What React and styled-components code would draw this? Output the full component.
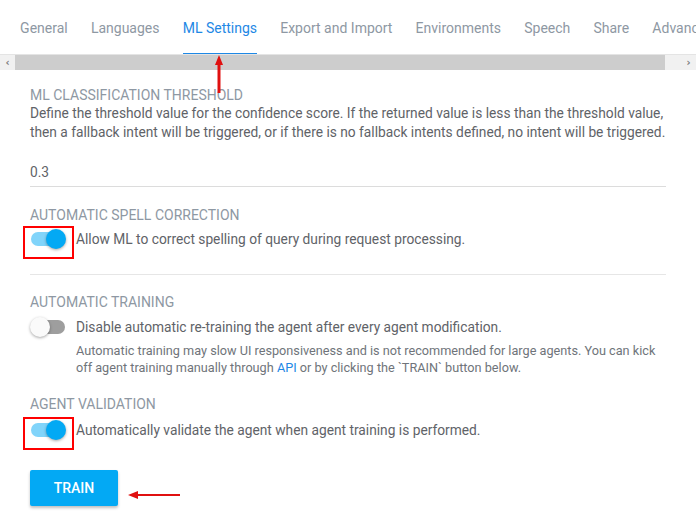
import React from "react";
import styled, { createGlobalStyle } from "styled-components";

const Global = createGlobalStyle`
  html, body { margin: 0; padding: 0; background: #fff; }
  body { font-family: Roboto, "Noto Sans", Arial, sans-serif; width: 696px; height: 515px; overflow: hidden; }
  * { box-sizing: border-box; }
`;

const Page = styled.div`
  position: relative;
  width: 696px;
  height: 515px;
  overflow: hidden;
`;

const TabBar = styled.nav`
  display: flex;
  height: 55px;
  padding-left: 8.5px;
  border-bottom: 1px solid #e4e4e4;
  white-space: nowrap;
  overflow: hidden;
`;

const Tab = styled.div`
  flex: none;
  padding: 2px 11.6px 0;
  display: flex;
  flex-direction: column;
  justify-content: center;
  align-items: center;
  font-size: 14px;
  color: ${(p) => (p.$active ? "#1e88e5" : "#8e98a3")};
  span {
    position: relative;
    line-height: 20px;
  }
  span::after {
    content: "";
    display: ${(p) => (p.$active ? "block" : "none")};
    position: absolute;
    left: 0;
    right: 0;
    top: 35px;
    height: 2px;
    background: #1e88e5;
  }
`;

const ScrollBar = styled.div`
  display: flex;
  height: 15px;
  background: #f1f1f1;
`;

const ScrollButton = styled.div`
  width: 15px;
  flex: none;
  display: flex;
  align-items: center;
  justify-content: center;
  color: #7a7a7a;
  font-size: 10px;
  font-family: "DejaVu Sans", sans-serif;
  font-weight: bold;
`;

const ScrollThumb = styled.div`
  flex: none;
  width: 650px;
  background: #cdcdcd;
`;

const ScrollTrack = styled.div`
  flex: 1;
`;

const Content = styled.main`
  padding: 0 30px;
`;

const Label = styled.div`
  margin-top: ${(p) => p.$mt}px;
  font-size: 14px;
  line-height: 18px;
  color: #8e98a3;
  text-transform: uppercase;
`;

const Description = styled.p`
  margin: 0;
  font-size: 13.75px;
  line-height: 19px;
  color: #5f6368;
  white-space: nowrap;
`;

const InputField = styled.div`
  margin-top: 20px;
  padding-bottom: 4px;
  border-bottom: 1px solid #dcdcdc;
  font-size: 13.75px;
  line-height: 20px;
  color: #5f6368;
`;

const ToggleRow = styled.div`
  margin-top: ${(p) => p.$mt}px;
  display: flex;
  align-items: center;
  height: 24px;
`;

const ToggleBox = styled.div`
  position: relative;
  width: 46px;
  flex: none;
  height: 24px;
`;

const Track = styled.div`
  position: absolute;
  left: 1px;
  top: 5px;
  width: 34px;
  height: 14px;
  border-radius: 7px;
  background: ${(p) => (p.$on ? "#81d4fa" : "#9e9e9e")};
`;

const Thumb = styled.div`
  position: absolute;
  top: 2px;
  left: ${(p) => (p.$on ? "16px" : "0")};
  width: 20px;
  height: 20px;
  border-radius: 50%;
  background: ${(p) => (p.$on ? "#03a9f4" : "#fafafa")};
  box-shadow: 0 1px 3px rgba(0, 0, 0, 0.35);
`;

const Highlight = styled.div`
  position: absolute;
  left: -7px;
  top: -1px;
  width: 51px;
  height: 33px;
  border: 2px solid #f00;
`;

const ToggleText = styled.span`
  font-size: 13.75px;
  color: #5f6368;
  line-height: 20px;
  white-space: nowrap;
`;

const Separator = styled.hr`
  margin: 23px 0 0;
  border: none;
  border-top: 1px solid #e6e6e6;
`;

const Hint = styled.p`
  margin: 3px 0 0 46px;
  font-size: 12.7px;
  line-height: 17px;
  color: #6f747a;
  white-space: nowrap;
`;

const Link = styled.a`
  color: #1e88e5;
  text-decoration: none;
`;

const TrainButton = styled.button`
  margin-top: 28px;
  width: 88px;
  height: 36px;
  border: none;
  border-radius: 2px;
  background: #03a9f4;
  color: #fff;
  font-family: Roboto, sans-serif;
  font-size: 14px;
  font-weight: 500;
  box-shadow: 0 2px 3px rgba(0, 0, 0, 0.25);
`;

const ButtonRow = styled.div`
  position: relative;
  display: flex;
  align-items: center;
`;

const Arrow = styled.svg`
  position: absolute;
  overflow: visible;
`;

function Toggle({ on, marked }) {
  return (
    <ToggleBox>
      <Track $on={on} />
      <Thumb $on={on} />
      {marked && <Highlight />}
    </ToggleBox>
  );
}

const tabs = [
  "General",
  "Languages",
  "ML Settings",
  "Export and Import",
  "Environments",
  "Speech",
  "Share",
  "Advanced",
];

export default function App() {
  return (
    <Page>
      <Global />
      <TabBar>
        {tabs.map((t) => (
          <Tab key={t} $active={t === "ML Settings"}>
            <span>{t}</span>
          </Tab>
        ))}
      </TabBar>
      <ScrollBar>
        <ScrollButton>‹</ScrollButton>
        <ScrollThumb />
        <ScrollTrack />
        <ScrollButton>›</ScrollButton>
      </ScrollBar>
      <Content>
        <Label $mt={16}>ML Classification Threshold</Label>
        <Description>
          Define the threshold value for the confidence score. If the returned value is less than the threshold value,
          <br />
          then a fallback intent will be triggered, or if there is no fallback intents defined, no intent will be triggered.
        </Description>
        <InputField>0.3</InputField>

        <Label $mt={19}>Automatic Spell Correction</Label>
        <ToggleRow $mt={3}>
          <Toggle on marked />
          <ToggleText>Allow ML to correct spelling of query during request processing.</ToggleText>
        </ToggleRow>
        <Separator />

        <Label $mt={18}>Automatic Training</Label>
        <ToggleRow $mt={4}>
          <Toggle />
          <ToggleText>Disable automatic re-training the agent after every agent modification.</ToggleText>
        </ToggleRow>
        <Hint>
          Automatic training may slow UI responsiveness and is not recommended for large agents. You can kick
          <br />
          off agent training manually through <Link href="#">API</Link> or by clicking the `TRAIN` button below.
        </Hint>

        <Label $mt={19}>Agent Validation</Label>
        <ToggleRow $mt={5}>
          <Toggle on marked />
          <ToggleText>Automatically validate the agent when agent training is performed.</ToggleText>
        </ToggleRow>
        <ButtonRow>
          <TrainButton>TRAIN</TrainButton>
          <Arrow style={{ left: 98, top: 49 }} width="52" height="8" viewBox="0 0 52 8">
            <line x1="6" y1="4" x2="52" y2="4" stroke="#e01010" strokeWidth="2" />
            <polygon points="0,4 10,0 10,8" fill="#e01010" />
          </Arrow>
        </ButtonRow>
      </Content>
      <Arrow style={{ left: 215, top: 55 }} width="8" height="38" viewBox="0 0 8 38">
        <line x1="4" y1="6" x2="4" y2="38" stroke="#e01010" strokeWidth="3" />
        <polygon points="4,0 0,10 8,10" fill="#e01010" />
      </Arrow>
    </Page>
  );
}
